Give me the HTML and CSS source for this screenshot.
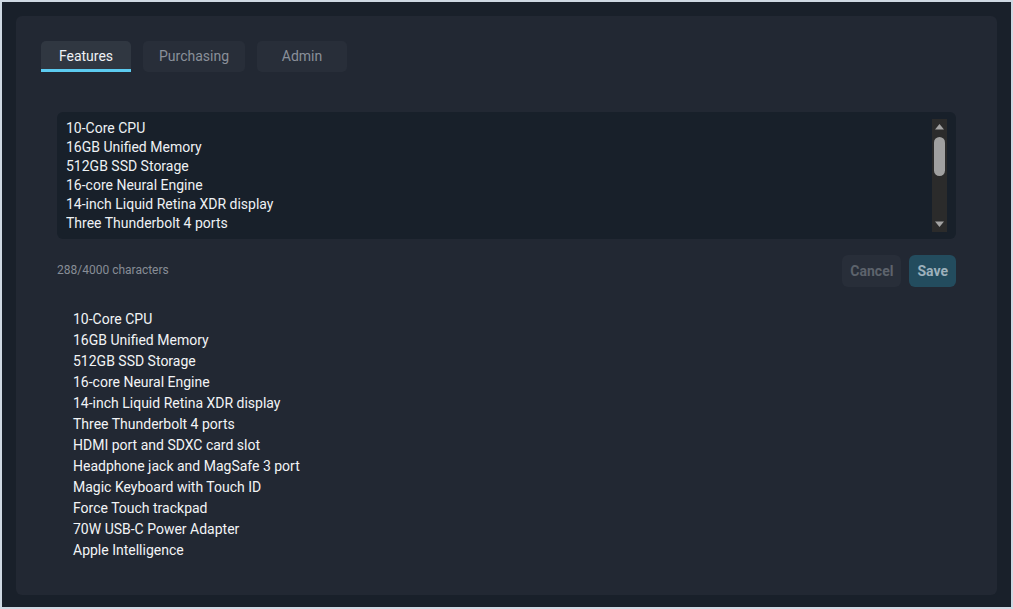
FILE: index.html
```html
<!DOCTYPE html>
<html lang="en">
<head>
<meta charset="utf-8">
<title>Product features</title>
<link rel="stylesheet" href="styles.css">
</head>
<body>
<div class="frame">
  <div class="card">
    <div class="tabs">
      <div class="tab active">Features</div>
      <div class="tab">Purchasing</div>
      <div class="tab">Admin</div>
    </div>
    <div class="panel">
      <div class="editor">
        <textarea class="input" spellcheck="false">10-Core CPU
16GB Unified Memory
512GB SSD Storage
16-core Neural Engine
14-inch Liquid Retina XDR display
Three Thunderbolt 4 ports
HDMI port and SDXC card slot
Headphone jack and MagSafe 3 port
Magic Keyboard with Touch ID
Force Touch trackpad
70W USB-C Power Adapter
Apple Intelligence</textarea>
        <div class="scrollbar">
          <svg class="arrow" width="15" height="15" viewBox="0 0 15 15"><path d="M3 10.5 L7.5 5 L12 10.5 Z" fill="#a3a3a3"/></svg>
          <div class="track"><div class="thumb"></div></div>
          <svg class="arrow" width="15" height="15" viewBox="0 0 15 15"><path d="M3 4.5 L7.5 10 L12 4.5 Z" fill="#a3a3a3"/></svg>
        </div>
      </div>
      <div class="footer">
        <span class="count">288/4000 characters</span>
        <div class="actions">
          <button class="btn cancel">Cancel</button>
          <button class="btn save">Save</button>
        </div>
      </div>
      <ul class="preview">
        <li>10-Core CPU</li>
        <li>16GB Unified Memory</li>
        <li>512GB SSD Storage</li>
        <li>16-core Neural Engine</li>
        <li>14-inch Liquid Retina XDR display</li>
        <li>Three Thunderbolt 4 ports</li>
        <li>HDMI port and SDXC card slot</li>
        <li>Headphone jack and MagSafe 3 port</li>
        <li>Magic Keyboard with Touch ID</li>
        <li>Force Touch trackpad</li>
        <li>70W USB-C Power Adapter</li>
        <li>Apple Intelligence</li>
      </ul>
    </div>
  </div>
</div>
</body>
</html>
```

FILE: styles.css
```css
* { box-sizing: border-box; }
html, body { margin: 0; padding: 0; }
body {
  background: #cfd9e3;
  font-family: Roboto, "Liberation Sans", sans-serif;
  width: 1013px;
  height: 609px;
  padding: 2px 2px 2px 2px;
}
.frame {
  background: #19202a;
  width: 1009px;
  height: 605px;
  padding: 14px 14px 12px 14px;
}
.card {
  background: #222833;
  border-radius: 6px;
  width: 981px;
  height: 579px;
  padding: 25px;
}
.tabs {
  display: flex;
  gap: 12px;
}
.tab {
  min-width: 90px;
  height: 31px;
  padding: 0 16px 1px 16px;
  display: flex;
  align-items: center;
  justify-content: center;
  font-size: 14px;
  color: #8a9099;
  background: #282e39;
  border-radius: 5px;
}
.tab.active {
  background: #303741;
  color: #eef1f4;
  border-radius: 5px 5px 0 0;
  border-bottom: 3px solid #5ccbf0;
  padding-top: 2px;
  padding-bottom: 0;
}
.panel {
  padding: 40px 16px 0 16px;
}
.editor {
  background: #18202a;
  border-radius: 6px;
  height: 127px;
  padding: 7px 9px;
  display: flex;
}
.input {
  flex: 1;
  background: transparent;
  border: none;
  outline: none;
  resize: none;
  overflow: hidden;
  padding: 0;
  margin: 0;
  font-family: Roboto, "Liberation Sans", sans-serif;
  font-size: 14px;
  line-height: 19px;
  color: #eef1f4;
  height: 113px;
}
.scrollbar {
  width: 15px;
  height: 113px;
  background: #2b2b2b;
  display: flex;
  flex-direction: column;
}
.arrow { display: block; flex: none; }
.track {
  flex: 1;
  padding: 3px 2px 0 2px;
}
.thumb {
  width: 11px;
  height: 39px;
  background: #a0a0a0;
  border-radius: 6px;
}
.footer {
  margin-top: 16px;
  display: flex;
  align-items: center;
  justify-content: space-between;
  height: 32px;
}
.count {
  font-size: 12px;
  line-height: 14px;
  color: #878d96;
  margin-bottom: 3px;
}
.actions {
  display: flex;
  gap: 8px;
}
.btn {
  font-family: Roboto, "Liberation Sans", sans-serif;
  font-size: 14px;
  font-weight: 700;
  height: 32px;
  padding: 0 8px;
  border: none;
  border-radius: 6px;
}
.cancel {
  background: #282e39;
  color: #5d636c;
}
.save {
  background: #234c5e;
  color: #9db1bc;
}
.preview {
  list-style: none;
  margin: 22px 0 0 0;
  padding: 0 0 0 16px;
  font-size: 14px;
  line-height: 21px;
  color: #f2f4f6;
}
```
